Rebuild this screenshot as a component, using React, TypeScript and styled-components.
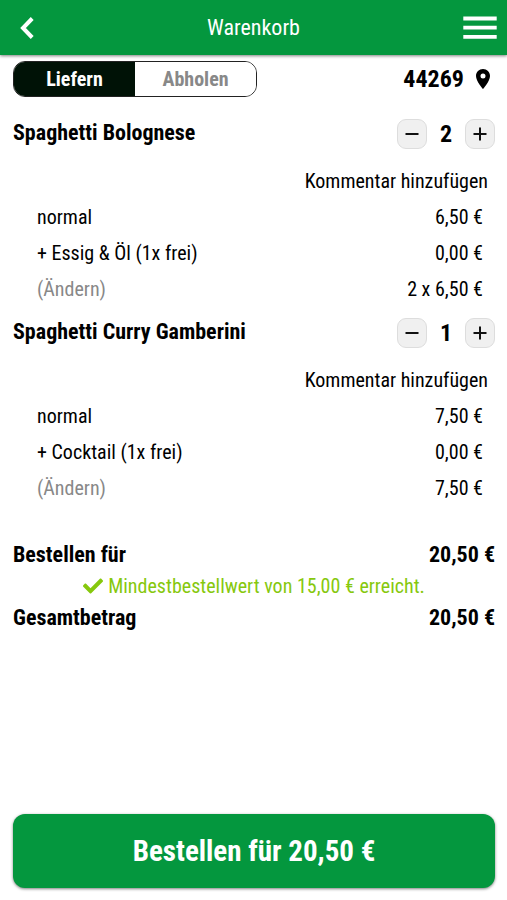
import React, { useState } from "react";
import styled, { createGlobalStyle } from "styled-components";
import { FaCheck } from "react-icons/fa";

const GlobalStyle = createGlobalStyle`
  *, *::before, *::after { box-sizing: border-box; }
  body {
    margin: 0;
    background: #fff;
    color: #000;
    font-family: "Roboto Condensed", Roboto, sans-serif;
    font-size: 20px;
    line-height: 24px;
  }
  button {
    padding: 0;
    border: 0;
    background: none;
    color: inherit;
    font: inherit;
    cursor: pointer;
  }
`;

const Page = styled.div`
  display: flex;
  flex-direction: column;
  min-height: 100vh;
`;

const Header = styled.header`
  display: grid;
  grid-template-columns: 36px 1fr 36px;
  align-items: center;
  height: 55px;
  padding: 0 9px;
  background: #04973e;
  color: #fff;
  box-shadow: 0 1px 3px rgba(0, 0, 0, 0.5);
`;

const Title = styled.h1`
  margin: 0;
  font-size: 22px;
  font-weight: 400;
  text-align: center;
`;

const IconButton = styled.button`
  display: flex;
  justify-content: center;
  align-items: center;
  height: 36px;
`;

const Content = styled.main`
  flex: 1;
  display: flex;
  flex-direction: column;
  padding: 6px 12px 12px 13px;
`;

const DeliveryBar = styled.div`
  display: flex;
  justify-content: space-between;
  align-items: center;
  margin-bottom: 11px;
`;

const Toggle = styled.div`
  display: grid;
  grid-template-columns: 1fr 1fr;
  width: 244px;
  height: 36px;
  border: 1px solid #222;
  border-radius: 12px;
  overflow: hidden;
`;

const ToggleOption = styled.button<{ $active: boolean }>`
  background: ${(p) => (p.$active ? "#001206" : "#fff")};
  color: ${(p) => (p.$active ? "#fff" : "#888")};
  font-weight: 700;
`;

const Postcode = styled.button`
  display: flex;
  align-items: center;
  gap: 12px;
  padding-right: 5px;
  font-size: 24px;
  font-weight: 700;
`;

const ItemHead = styled.div`
  display: flex;
  justify-content: space-between;
  align-items: flex-start;
  padding: 11px 0 14px;
`;

const ItemName = styled.h2`
  margin: 0;
  font-size: 22px;
  line-height: 28px;
  font-weight: 700;
`;

const Stepper = styled.div`
  display: grid;
  grid-template-columns: 30px 38px 30px;
  align-items: center;
`;

const StepButton = styled.button`
  display: flex;
  justify-content: center;
  align-items: center;
  height: 30px;
  border: 1px solid #ddd;
  border-radius: 9px;
  background: #f0f0f0;
`;

const Quantity = styled.span`
  font-size: 24px;
  font-weight: 700;
  text-align: center;
`;

const CommentRow = styled.div`
  display: flex;
  justify-content: flex-end;
  align-items: center;
  height: 36px;
  padding-right: 7px;
`;

const DetailRow = styled.div`
  display: flex;
  justify-content: space-between;
  align-items: center;
  height: 36px;
  padding: 0 12px 0 24px;
`;

const ChangeButton = styled.button`
  color: #888;
`;

const Totals = styled.section`
  margin: 33px 0 24px;
`;

const TotalRow = styled.div`
  display: flex;
  justify-content: space-between;
  align-items: center;
  height: 31px;
  font-size: 22px;
  font-weight: 700;
`;

const MinimumNote = styled.p`
  display: flex;
  justify-content: center;
  align-items: center;
  gap: 5px;
  height: 32px;
  margin: 0;
  color: #86c80d;
`;

const OrderButton = styled.button`
  height: 74px;
  margin-top: auto;
  border-radius: 12px;
  background: #04973e;
  color: #fff;
  font-size: 29px;
  font-weight: 700;
  box-shadow: 0 1px 3px rgba(0, 0, 0, 0.5);
`;

const euro = (value: number) => `${value.toFixed(2).replace(".", ",")} €`;

type Item = { name: string; price: number; extra: string };

const items: Item[] = [
  { name: "Spaghetti Bolognese", price: 6.5, extra: "+ Essig & Öl (1x frei)" },
  { name: "Spaghetti Curry Gamberini", price: 7.5, extra: "+ Cocktail (1x frei)" },
];

const modes = ["Liefern", "Abholen"];

const StepIcon = ({ plus }: { plus?: boolean }) => (
  <svg width="14" height="14" viewBox="0 0 14 14" stroke="#111" strokeWidth="2" aria-hidden="true">
    <path d={plus ? "M0.5 7H13.5M7 0.5V13.5" : "M0.5 7H13.5"} />
  </svg>
);

export default function App() {
  const [mode, setMode] = useState("Liefern");
  const [counts, setCounts] = useState([2, 1]);
  const change = (index: number, by: number) =>
    setCounts(counts.map((n, i) => (i === index ? Math.max(0, n + by) : n)));
  const total = items.reduce((sum, item, i) => sum + item.price * counts[i], 0);

  return (
    <Page>
      <GlobalStyle />
      <Header>
        <IconButton aria-label="Zurück">
          <svg width="14" height="22" viewBox="0 0 14 22" fill="none" stroke="#fff" strokeWidth="4">
            <path d="M12.2 1.5L3 11L12.2 20.5" />
          </svg>
        </IconButton>
        <Title>Warenkorb</Title>
        <IconButton aria-label="Menü">
          <svg width="34" height="23" viewBox="0 0 34 23" fill="#fff">
            <path d="M0.3 0.6H33.7V4.4H0.3ZM0.3 9.8H33.7V13.6H0.3ZM0.3 19H33.7V22.8H0.3Z" />
          </svg>
        </IconButton>
      </Header>
      <Content>
        <DeliveryBar>
          <Toggle role="group" aria-label="Bestellart">
            {modes.map((m) => (
              <ToggleOption key={m} $active={m === mode} aria-pressed={m === mode} onClick={() => setMode(m)}>
                {m}
              </ToggleOption>
            ))}
          </Toggle>
          <Postcode>
            44269
            <svg width="14" height="20" viewBox="0 0 14 20" aria-hidden="true">
              <path
                fillRule="evenodd"
                d="M7 0C3.1 0 0 3.1 0 7C0 12.2 7 20 7 20S14 12.2 14 7C14 3.1 10.9 0 7 0ZM7 4.5A2.5 2.5 0 1 1 7 9.5A2.5 2.5 0 1 1 7 4.5Z"
              />
            </svg>
          </Postcode>
        </DeliveryBar>
        {items.map((item, i) => (
          <section key={item.name}>
            <ItemHead>
              <ItemName>{item.name}</ItemName>
              <Stepper>
                <StepButton aria-label="Weniger" onClick={() => change(i, -1)}>
                  <StepIcon />
                </StepButton>
                <Quantity>{counts[i]}</Quantity>
                <StepButton aria-label="Mehr" onClick={() => change(i, 1)}>
                  <StepIcon plus />
                </StepButton>
              </Stepper>
            </ItemHead>
            <CommentRow>
              <button>Kommentar hinzufügen</button>
            </CommentRow>
            <DetailRow>
              <span>normal</span>
              <span>{euro(item.price)}</span>
            </DetailRow>
            <DetailRow>
              <span>{item.extra}</span>
              <span>{euro(0)}</span>
            </DetailRow>
            <DetailRow>
              <ChangeButton>(Ändern)</ChangeButton>
              <span>{counts[i] > 1 ? `${counts[i]} x ${euro(item.price)}` : euro(item.price)}</span>
            </DetailRow>
          </section>
        ))}
        <Totals>
          <TotalRow>
            <span>Bestellen für</span>
            <span>{euro(total)}</span>
          </TotalRow>
          <MinimumNote>
            <FaCheck size={20} aria-hidden="true" />
            Mindestbestellwert von 15,00 € erreicht.
          </MinimumNote>
          <TotalRow>
            <span>Gesamtbetrag</span>
            <span>{euro(total)}</span>
          </TotalRow>
        </Totals>
        <OrderButton>Bestellen für {euro(total)}</OrderButton>
      </Content>
    </Page>
  );
}
